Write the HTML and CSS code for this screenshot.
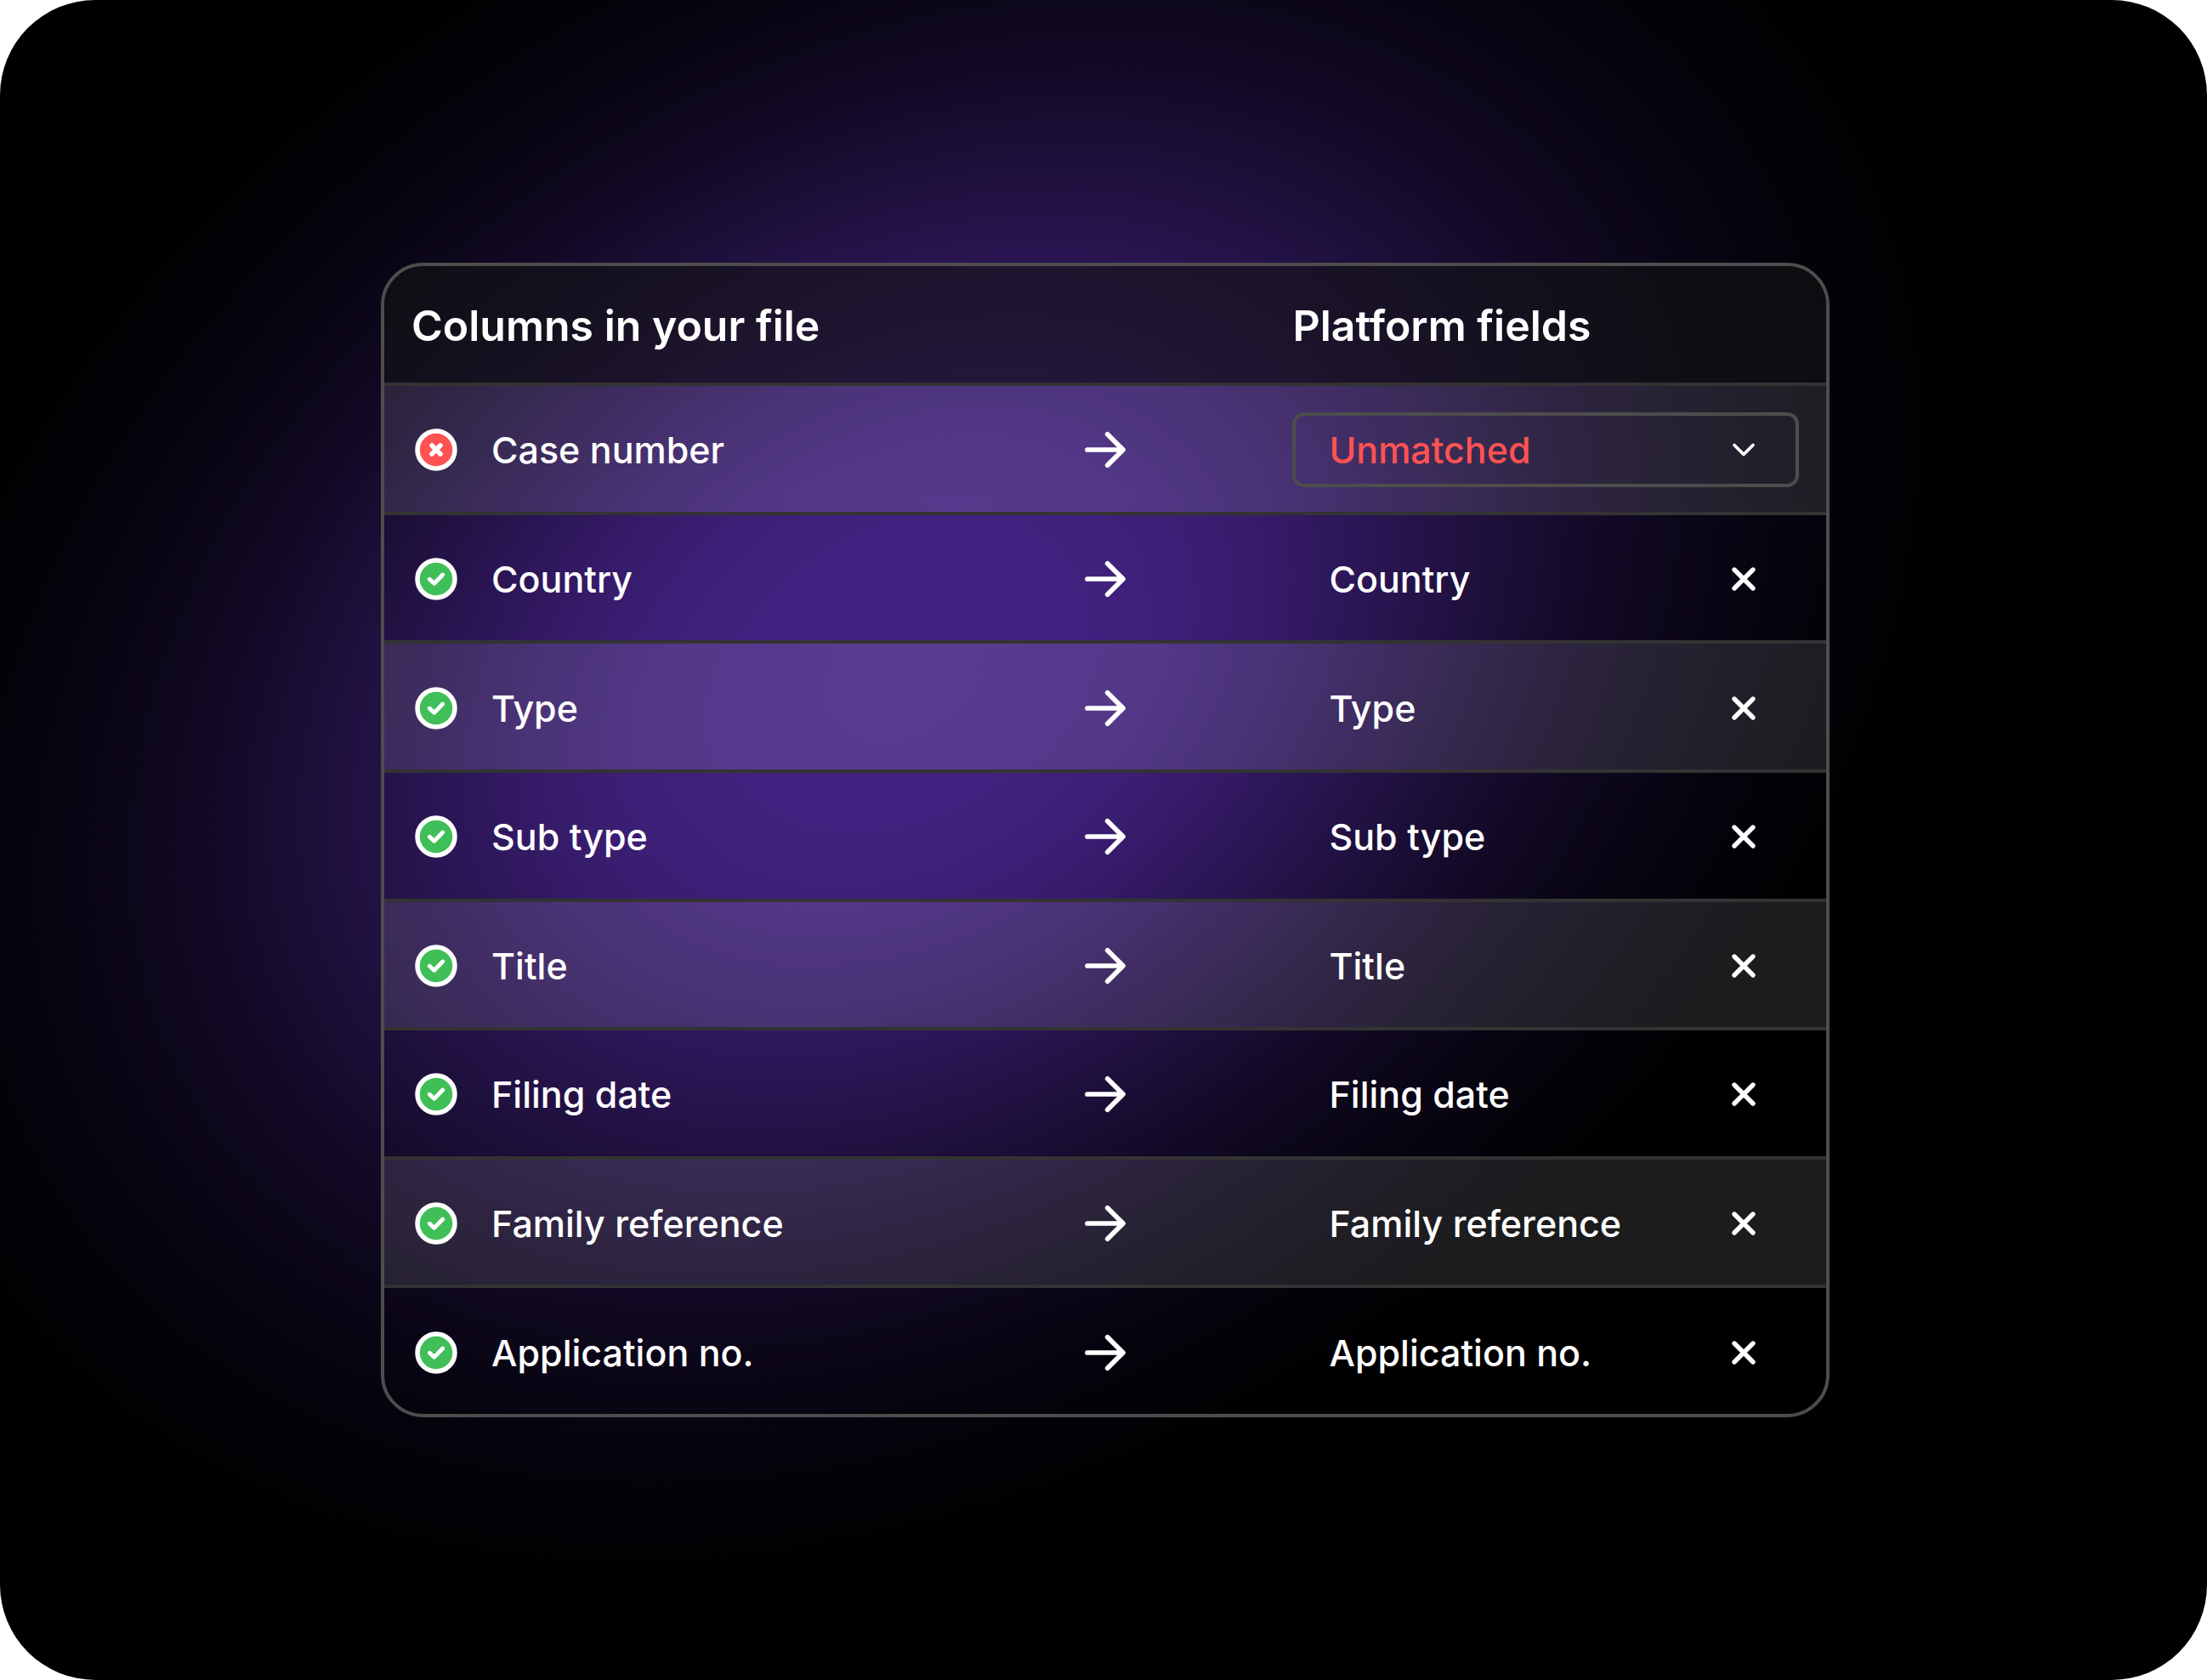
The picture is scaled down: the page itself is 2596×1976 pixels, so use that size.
FILE: index.html
```
<!DOCTYPE html>
<html lang="en">
<head>
    <meta charset="UTF-8">
    <meta name="viewport" content="width=device-width, initial-scale=1.0">
    <title>Match columns</title>
    <link rel="stylesheet" href="styles.css">
</head>
<body>
    <!-- Shared icons -->
    <svg class="sprite" aria-hidden="true">
        <symbol id="icon-error" viewBox="-29 -29 58 58">
            <circle r="22" fill="#ff5252" stroke="#fff" stroke-width="5.5"/>
            <path d="M-5 -5 5 5M5 -5-5 5" fill="none" stroke="#fff" stroke-width="5.5" stroke-linecap="round"/>
        </symbol>
        <symbol id="icon-ok" viewBox="-29 -29 58 58">
            <circle r="22" fill="#40bf58" stroke="#fff" stroke-width="5.5"/>
            <path d="M-7.7 .2-2.3 5.3 7.7-5" fill="none" stroke="#fff" stroke-width="4.8" stroke-linecap="round" stroke-linejoin="round"/>
        </symbol>
        <symbol id="icon-arrow" viewBox="-29 -29 58 58">
            <path d="M-21 0H20M2.7-18.3 21 0 2.7 18.3" fill="none" stroke="#fff" stroke-width="5.7" stroke-linecap="round" stroke-linejoin="round"/>
        </symbol>
        <symbol id="icon-close" viewBox="-29 -29 58 58">
            <path d="M-11-11 11 11M11-11-11 11" fill="none" stroke="#fff" stroke-width="5.4" stroke-linecap="round"/>
        </symbol>
        <symbol id="icon-chevron" viewBox="-29 -29 58 58">
            <path d="M-11-5.5 0 5.5 11-5.5" fill="none" stroke="#fff" stroke-width="3.7" stroke-linecap="round" stroke-linejoin="round"/>
        </symbol>
    </svg>

    <main class="stage">
        <div class="card">
            <table class="mapping">
                <thead>
                    <tr>
                        <th class="col-source" scope="col">Columns in your file</th>
                        <td class="col-arrow"></td>
                        <th class="col-target" scope="col">Platform fields</th>
                    </tr>
                </thead>
                <tbody>
                    <tr>
                        <td><div class="source"><svg class="icon" role="img" aria-label="Not matched"><use href="#icon-error"/></svg><label for="case-number">Case number</label></div></td>
                        <td class="arrow"><svg class="icon" aria-hidden="true"><use href="#icon-arrow"/></svg></td>
                        <td>
                            <div class="picker">
                                <select class="picker-select" id="case-number">
                                    <option>Unmatched</option>
                                </select>
                                <svg class="icon picker-chevron" aria-hidden="true"><use href="#icon-chevron"/></svg>
                            </div>
                        </td>
                    </tr>
                    <tr>
                        <td><div class="source"><svg class="icon" role="img" aria-label="Matched"><use href="#icon-ok"/></svg><span>Country</span></div></td>
                        <td class="arrow"><svg class="icon" aria-hidden="true"><use href="#icon-arrow"/></svg></td>
                        <td><div class="field"><span>Country</span><button class="remove" type="button" aria-label="Remove Country"><svg class="icon"><use href="#icon-close"/></svg></button></div></td>
                    </tr>
                    <tr>
                        <td><div class="source"><svg class="icon" role="img" aria-label="Matched"><use href="#icon-ok"/></svg><span>Type</span></div></td>
                        <td class="arrow"><svg class="icon" aria-hidden="true"><use href="#icon-arrow"/></svg></td>
                        <td><div class="field"><span>Type</span><button class="remove" type="button" aria-label="Remove Type"><svg class="icon"><use href="#icon-close"/></svg></button></div></td>
                    </tr>
                    <tr>
                        <td><div class="source"><svg class="icon" role="img" aria-label="Matched"><use href="#icon-ok"/></svg><span>Sub type</span></div></td>
                        <td class="arrow"><svg class="icon" aria-hidden="true"><use href="#icon-arrow"/></svg></td>
                        <td><div class="field"><span>Sub type</span><button class="remove" type="button" aria-label="Remove Sub type"><svg class="icon"><use href="#icon-close"/></svg></button></div></td>
                    </tr>
                    <tr>
                        <td><div class="source"><svg class="icon" role="img" aria-label="Matched"><use href="#icon-ok"/></svg><span>Title</span></div></td>
                        <td class="arrow"><svg class="icon" aria-hidden="true"><use href="#icon-arrow"/></svg></td>
                        <td><div class="field"><span>Title</span><button class="remove" type="button" aria-label="Remove Title"><svg class="icon"><use href="#icon-close"/></svg></button></div></td>
                    </tr>
                    <tr>
                        <td><div class="source"><svg class="icon" role="img" aria-label="Matched"><use href="#icon-ok"/></svg><span>Filing date</span></div></td>
                        <td class="arrow"><svg class="icon" aria-hidden="true"><use href="#icon-arrow"/></svg></td>
                        <td><div class="field"><span>Filing date</span><button class="remove" type="button" aria-label="Remove Filing date"><svg class="icon"><use href="#icon-close"/></svg></button></div></td>
                    </tr>
                    <tr>
                        <td><div class="source"><svg class="icon" role="img" aria-label="Matched"><use href="#icon-ok"/></svg><span>Family reference</span></div></td>
                        <td class="arrow"><svg class="icon" aria-hidden="true"><use href="#icon-arrow"/></svg></td>
                        <td><div class="field"><span>Family reference</span><button class="remove" type="button" aria-label="Remove Family reference"><svg class="icon"><use href="#icon-close"/></svg></button></div></td>
                    </tr>
                    <tr>
                        <td><div class="source"><svg class="icon" role="img" aria-label="Matched"><use href="#icon-ok"/></svg><span>Application no.</span></div></td>
                        <td class="arrow"><svg class="icon" aria-hidden="true"><use href="#icon-arrow"/></svg></td>
                        <td><div class="field"><span>Application no.</span><button class="remove" type="button" aria-label="Remove Application no."><svg class="icon"><use href="#icon-close"/></svg></button></div></td>
                    </tr>
                </tbody>
            </table>
        </div>
    </main>
</body>
</html>
```
FILE: styles.css
```
* {
    box-sizing: border-box;
}
body {
    margin: 0;
    background: #fff;
    color: #fff;
    font-family: Inter, sans-serif;
    font-size: 43px;
    font-weight: 500;
    line-height: 52px;
}
.sprite {
    display: none;
}
.stage {
    position: relative;
    display: flex;
    height: 100vh;
    min-height: 1600px;
    padding: 309px 444px 309px 448px;
    overflow: hidden;
    border-radius: 112px;
    background: #000;
}
/* purple glow behind the card */
.stage::before {
    content: "";
    position: absolute;
    left: -10%;
    top: -9%;
    width: 102%;
    height: 98%;
    transform: rotate(-32deg);
    background: radial-gradient(closest-side,
        #442482 0%, #412280 16%, #3c1f76 27%, #341a66 36%, #291450 46%,
        #1e103c 55%, #150a2a 64%, #0d071b 73%, #080411 81%, #040209 89%, transparent 100%);
}
.card {
    position: relative;
    flex: 1;
    overflow: hidden;
    border: 4px solid #4d4d4d;
    border-radius: 50px;
}
.mapping {
    width: 100%;
    height: 100%;
    table-layout: fixed;
    border-collapse: separate;
    border-spacing: 0;
}
.mapping th,
.mapping td {
    padding: 3px 0 0;
    vertical-align: middle;
    text-align: left;
}
.mapping th:first-child,
.mapping td:first-child {
    padding-left: 32px;
}
.mapping th:last-child,
.mapping td:last-child {
    padding-right: 32px;
}
.mapping thead tr {
    height: 137px;
    background: rgba(20, 20, 20, 0.6);
}
.mapping th {
    font-size: 50px;
    font-weight: 600;
    line-height: 62px;
}
.mapping tbody tr {
    height: 151px;
}
.mapping tbody td {
    border-top: 4px solid #333;
}
.mapping tbody tr:nth-child(odd) {
    background: rgba(255, 255, 255, 0.11);
}
.col-source,
.col-target {
    width: 37%;
}
.col-arrow {
    width: 26%;
}
.mapping .arrow {
    text-align: center;
}
.icon {
    display: block;
    flex: none;
    width: 58px;
    height: 58px;
}
.arrow .icon {
    margin: 0 auto;
}
.source {
    display: flex;
    align-items: center;
    gap: 36px;
}
.field {
    display: flex;
    align-items: center;
    justify-content: space-between;
    padding: 0 36px 0 43px;
}
.remove {
    padding: 0;
    border: 0;
    background: none;
    cursor: pointer;
}
.picker {
    position: relative;
}
.picker-select {
    display: block;
    width: 100%;
    height: 88px;
    padding: 0 100px 0 39px;
    appearance: none;
    border: 4px solid #4d4d4d;
    border-radius: 14px;
    background: transparent;
    color: #ff5252;
    font: inherit;
}
.picker-chevron {
    position: absolute;
    top: 15px;
    right: 36px;
    pointer-events: none;
}
```
